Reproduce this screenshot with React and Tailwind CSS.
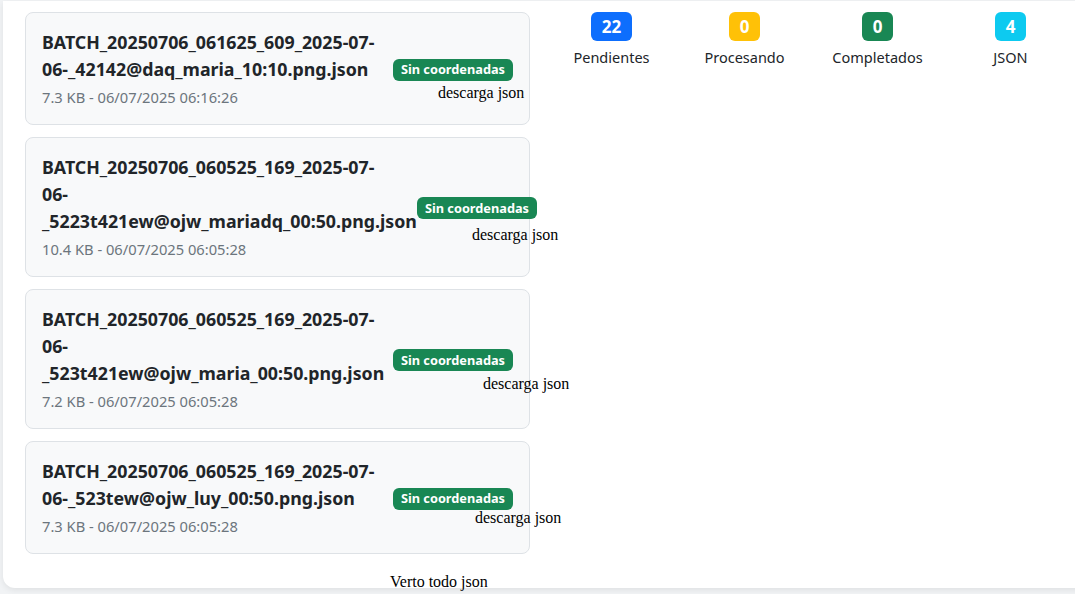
const files = [
  {
    lines: ["BATCH_20250706_061625_609_2025-07-", "06-_42142@daq_maria_10:10.png.json"],
    meta: "7.3 KB - 06/07/2025 06:16:26",
    dl: "left-[412px] top-[68px]",
  },
  {
    lines: ["BATCH_20250706_060525_169_2025-07-", "06-", "_5223t421ew@ojw_mariadq_00:50.png.json"],
    meta: "10.4 KB - 06/07/2025 06:05:28",
    dl: "left-[446px] top-[85px]",
  },
  {
    lines: ["BATCH_20250706_060525_169_2025-07-", "06-", "_523t421ew@ojw_maria_00:50.png.json"],
    meta: "7.2 KB - 06/07/2025 06:05:28",
    dl: "left-[457px] top-[82px]",
  },
  {
    lines: ["BATCH_20250706_060525_169_2025-07-", "06-_523tew@ojw_luy_00:50.png.json"],
    meta: "7.3 KB - 06/07/2025 06:05:28",
    dl: "left-[449px] top-[64px]",
  },
];

const stats = [
  { n: 22, l: "Pendientes", c: "bg-[#0d6efd]" },
  { n: 0, l: "Procesando", c: "bg-[#ffc107]" },
  { n: 0, l: "Completados", c: "bg-[#198754]" },
  { n: 4, l: "JSON", c: "bg-[#0dcaf0]" },
];

function FileCard({ f }) {
  return (
    <div className="relative flex items-center justify-between rounded-lg border border-[#dee2e6] bg-[#f8f9fa] p-4">
      <div>
        <div className="mb-1 whitespace-nowrap text-[17.8px] font-bold leading-[27px] text-[#212529]">
          {f.lines.map((l, i) => (
            <div key={i}>{l}</div>
          ))}
        </div>
        <div className="text-[14.7px] leading-[21px] text-[#6c757d]">{f.meta}</div>
      </div>
      <div className="shrink-0 leading-6">
        <span className="inline-block whitespace-nowrap rounded-[6px] bg-[#198754] px-[8px] py-[4.5px] text-[12.75px] font-bold leading-none text-white">
          Sin coordenadas
        </span>
      </div>
      <span className={`absolute whitespace-nowrap font-['Liberation_Serif',serif] text-[16px] leading-6 text-black ${f.dl}`}>
        descarga json
      </span>
    </div>
  );
}

export default function App() {
  return (
    <div className="min-h-[594px] w-[1075px] overflow-hidden bg-[#f1f3f5] pl-[3px] pt-px font-['Noto_Sans',sans-serif]">
      <div className="flow-root w-[1080px] rounded-bl-xl bg-white pl-[22px] pt-[11px] shadow-[0_2px_6px_rgba(0,0,0,0.08)]">
        <div className="flex">
          <div className="flex w-[505px] flex-col gap-3">
            {files.map((f, i) => (
              <FileCard key={i} f={f} />
            ))}
          </div>
          <div className="ml-[15px] grid w-[532px] grid-cols-4 self-start">
            {stats.map((s) => (
              <div key={s.l} className="flex flex-col items-center">
                <span className={`rounded-[6px] px-[11px] py-[6px] text-[17px] font-bold leading-none text-white ${s.c}`}>
                  {s.n}
                </span>
                <span className="mt-1 text-[14.5px] leading-6 text-[#212529]">{s.l}</span>
              </div>
            ))}
          </div>
        </div>
        <div className="-mb-[6px] ml-[365px] mt-4 font-['Liberation_Serif',serif] text-[16px] leading-6 text-black">
          Verto todo json
        </div>
      </div>
    </div>
  );
}
